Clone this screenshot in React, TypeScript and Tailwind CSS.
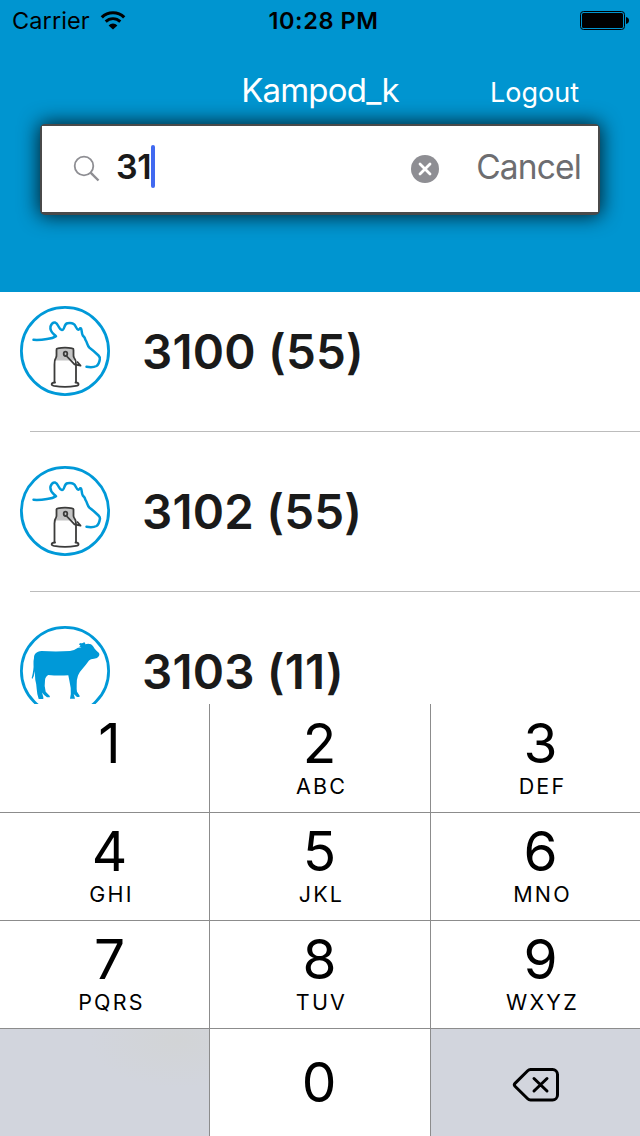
import clsx from "clsx";
import { useState } from "react";

type Kind = "cow" | "calf";

type Animal = {
  id: string;
  group: number;
  kind: Kind;
};

const animals: Animal[] = [
  { id: "3100", group: 55, kind: "cow" },
  { id: "3102", group: 55, kind: "cow" },
  { id: "3103", group: 11, kind: "calf" },
];

const keys = [
  { digit: "1", letters: "" },
  { digit: "2", letters: "ABC" },
  { digit: "3", letters: "DEF" },
  { digit: "4", letters: "GHI" },
  { digit: "5", letters: "JKL" },
  { digit: "6", letters: "MNO" },
  { digit: "7", letters: "PQRS" },
  { digit: "8", letters: "TUV" },
  { digit: "9", letters: "WXYZ" },
];

function WifiIcon() {
  return (
    <svg width="26" height="20" viewBox="0 0 26 20" fill="none" stroke="#000">
      <path d="M1.8 6.3a16 16 0 0 1 22.4 0" strokeWidth="3.2" />
      <path d="M5.7 10.6a10.4 10.4 0 0 1 14.6 0" strokeWidth="2.9" />
      <path d="M13 18.6l-4.4-4.2a6.2 6.2 0 0 1 8.8 0z" fill="#000" stroke="none" />
    </svg>
  );
}

function BatteryIcon() {
  return (
    <svg width="50" height="20" viewBox="0 0 50 20" fill="none">
      <rect x="0.5" y="0.5" width="44" height="18" rx="3" stroke="#000" />
      <rect x="2" y="2" width="41" height="15" rx="1.5" fill="#000" />
      <path d="M46 6c2 .3 3 1.6 3 3.5s-1 3.2-3 3.5z" fill="#000" />
    </svg>
  );
}

function SearchIcon() {
  return (
    <svg width="28" height="28" viewBox="0 0 28 28" fill="none" stroke="#8e8e93">
      <circle cx="11" cy="11" r="9.3" strokeWidth="1.8" />
      <path d="M17.6 17.6L25.5 25.5" strokeWidth="2.4" />
    </svg>
  );
}

function ClearIcon() {
  return (
    <svg width="28" height="28" viewBox="0 0 28 28" fill="none">
      <circle cx="14" cy="14" r="14" fill="#8e8e93" />
      <path
        d="M9 9l10 10M19 9L9 19"
        stroke="#fff"
        strokeWidth="2.8"
        strokeLinecap="round"
      />
    </svg>
  );
}

function BackspaceIcon() {
  return (
    <svg
      width="48"
      height="36"
      viewBox="0 0 48 36"
      fill="none"
      stroke="#000"
      strokeWidth="3"
      strokeLinecap="round"
      strokeLinejoin="round"
    >
      <path d="M18.5 2.5H40.5a5 5 0 0 1 5 5V28a5 5 0 0 1-5 5H18.5a4 4 0 0 1-2.8-1.2L3 19.2a2 2 0 0 1 0-2.8L15.7 3.7a4 4 0 0 1 2.8-1.2z" />
      <path d="M22 11.5l13 12.5M35 11.5L22 24" />
    </svg>
  );
}

function CowIcon() {
  return (
    <svg width="90" height="90" viewBox="0 0 90 90" fill="none">
      <circle cx="45" cy="45" r="43.6" stroke="#0099d8" strokeWidth="2.8" />
      <path
        d="M13.5 33.8Q20 34.2 27 33Q33 32.5 36 30.3C33.5 27.5 29.5 26 30.5 20.5C31.5 17.500 33.5 16.3 35.3 16.6C38.5 17.5 38.5 23.7 42 24C45 24 43.5 18.5 47.3 17.3Q51 16.5 53.5 17.8C56 19 56 23.3 58.3 23.7C59.8 23.5 60 21.5 61 22.5C62 24 61.5 27.5 62.8 29.5Q65 31.5 65.5 34C67.5 36.5 67 39.5 69.5 41.7Q74 45 78.5 49.5Q80.5 51.5 79.8 53.5Q79 58.5 76.5 60C73 61.7 69.5 61.3 66.5 60.7"
        stroke="#0099d8"
        strokeWidth="2.5"
        strokeLinecap="round"
        strokeLinejoin="round"
      />
      {/* milk can */}
      <path
        d="M37.5 42.3Q45 41 52.5 42.3Q53.8 42.6 53.5 44V50Q53.8 52 55.5 54.5H34.5Q36.2 52 36.5 50V44Q36.2 42.6 37.5 42.3Z"
        fill="#c4c4c4"
      />
      <path
        d="M34.5 77V58.5Q34.3 54 36 51.5Q36.6 50.5 36.5 49V44Q36.3 42.5 37.7 42.3Q45 41 52.3 42.3Q53.7 42.5 53.5 44V49Q53.4 50.5 54 51.5Q56.2 54 56 58.5V77"
        stroke="#3c3c3b"
        strokeWidth="1.8"
        strokeLinejoin="round"
      />
      <path
        d="M35 76.5C30.5 77 31 79.3 34 79.9Q45 81.8 56 79.9C59.3 79.3 59.6 77 55.5 76.5"
        stroke="#3c3c3b"
        strokeWidth="1.8"
        strokeLinecap="round"
      />
      <ellipse cx="45.5" cy="47.8" rx="1.8" ry="2.2" stroke="#3c3c3b" strokeWidth="1.8" />
      <path
        d="M46.5 50L54.5 58.3L60.5 59.7L57 55.5"
        stroke="#3c3c3b"
        strokeWidth="1.8"
        strokeLinejoin="round"
      />
    </svg>
  );
}

function CalfIcon() {
  return (
    <svg width="90" height="90" viewBox="0 0 90 90" fill="none">
      <circle cx="45" cy="45" r="43.6" stroke="#0099d8" strokeWidth="2.8" />
      <path
        d="M14 32C14 28 16 25.5 21.7 25Q36 25.8 50 25Q54.5 24.5 58 21.8L61.5 21.3L59.2 20.5L60.5 19.5L59 18.5L60 17Q62.3 18 64 16.3Q65.5 16.5 65.3 18.2Q68.5 17.3 71 18.3Q73 19.5 74.7 22.7Q77 25.5 79 27Q79.8 28.5 79 30Q77.5 32.5 74 32.8Q70.5 33 69 34.5Q65.5 39.5 62.3 43Q59 46.5 58 49.5Q56.3 54.5 56.7 58.5Q56.5 63 57 65.7L59.5 69.5V71H57L53.7 68L55 72.7H50Q51.3 68 50.7 62Q49.5 55 48.3 49.3Q38 50 28.3 49Q25 51 25 54.5Q24 60 25.7 65.7L29.8 70V71.3H27Q24 69.5 22 66.5L23.3 71V73H18.7Q17 68.5 16.7 63Q16.5 58 15.3 54L14.7 45Q14.3 50 12.3 53L11.7 52Q14 43 13.5 38Q13.3 35 14 32Z"
        fill="#0099d8"
      />
    </svg>
  );
}

function StatusBar() {
  return (
    <div className="flex h-10 items-center justify-between pt-px pr-[10px] pl-3 text-black">
      <div className="flex flex-1 items-center gap-[10px]">
        <span className="text-[23.5px] tracking-[0.1px]">Carrier</span>
        <WifiIcon />
      </div>
      <span className="pl-[5px] text-[23.5px] font-semibold tracking-[0.6px]">
        10:28 PM
      </span>
      <div className="flex flex-1 justify-end">
        <BatteryIcon />
      </div>
    </div>
  );
}

function SearchField({ query, onClear }: { query: string; onClear: () => void }) {
  return (
    <div className="mx-10 mt-[3px] rounded-[5px] bg-[#4a4a4a] px-[2px] pt-[2px] pb-[3px] shadow-[0_0_20px_1px_rgba(0,0,0,0.8)]">
      <div className="flex h-[86px] items-center bg-white pr-[17px] pl-[31px]">
        <SearchIcon />
        <div className="ml-[15px] flex items-center pb-[5px]">
          <span className="text-[34px] font-semibold tracking-[-0.4px] text-[#1a1a1a]">
            {query}
          </span>
          <span className="h-[43px] w-1 rounded-sm bg-[#4169f0]" />
        </div>
        <button className="ml-auto" onClick={onClear} aria-label="Clear">
          <ClearIcon />
        </button>
        <button
          className="ml-[37px] pb-[3px] text-[33.5px] tracking-[-0.85px] text-[#6d6d70]"
          onClick={onClear}
        >
          Cancel
        </button>
      </div>
    </div>
  );
}

function AnimalRow({ animal }: { animal: Animal }) {
  return (
    <li className="ml-[30px] h-40 border-b border-[#bcbcbc]">
      <div className="-ml-[10px] flex h-full items-center gap-8 pb-px">
        {animal.kind === "cow" ? <CowIcon /> : <CalfIcon />}
        <span className="pt-px text-[47.5px] font-semibold tracking-[0.2px] text-[#1a1a1a] [font-feature-settings:'calt'_0]">
          {animal.id} ({animal.group})
        </span>
      </div>
    </li>
  );
}

function Keypad({
  onPress,
  onDelete,
}: {
  onPress: (digit: string) => void;
  onDelete: () => void;
}) {
  return (
    <div className="grid h-[432px] grid-cols-[210px_221px_209px] grid-rows-4 bg-white text-black">
      {keys.map(({ digit, letters }, i) => (
        <button
          key={digit}
          onClick={() => onPress(digit)}
          className={clsx(
            "flex flex-col items-center border-[#8c8c8c]",
            i > 2 ? "border-t pt-[7px]" : "pt-2",
            i % 3 !== 2 && "border-r",
            i % 3 !== 1 && "pl-[11px]"
          )}
        >
          <span className="-ml-px text-[55px] leading-[63px]">{digit}</span>
          <span className="mt-px -mr-[3px] text-[21.5px] leading-5 tracking-[2.2px]">
            {letters}
          </span>
        </button>
      ))}
      <div className="border-t border-r border-[#8c8c8c] bg-[#d2d5dd] bg-[radial-gradient(ellipse_at_85%_10%,#d2d4d6,transparent_35%)]" />
      <button
        className="border-t border-r border-[#8c8c8c] pr-[2px] text-[55px] leading-none"
        onClick={() => onPress("0")}
      >
        0
      </button>
      <button
        className="flex items-center justify-center border-t border-[#8c8c8c] bg-[#d2d5dd] pt-[5px]"
        onClick={onDelete}
        aria-label="Delete"
      >
        <BackspaceIcon />
      </button>
    </div>
  );
}

export default function App() {
  const [query, setQuery] = useState("31");
  const results = animals.filter((animal) => animal.id.startsWith(query));

  return (
    <div className="flex h-[1136px] w-[640px] flex-col overflow-hidden bg-white font-['Inter',sans-serif]">
      <header className="h-[292px] shrink-0 bg-[#0095d0]">
        <StatusBar />
        <div className="grid h-[81px] grid-cols-[1fr_160px_1fr] items-center pt-5 text-white">
          <h1 className="col-start-2 text-center text-[33px] tracking-[-0.8px]">
            Kampod_k
          </h1>
          <button className="justify-self-end pt-[6px] pr-[61px] text-[27px]">
            Logout
          </button>
        </div>
        <SearchField query={query} onClear={() => setQuery("")} />
      </header>
      <main className="h-[412px] shrink-0 overflow-hidden">
        <ul className="-mt-5">
          {results.map((animal) => (
            <AnimalRow key={animal.id} animal={animal} />
          ))}
        </ul>
      </main>
      <Keypad
        onPress={(digit) => setQuery(query + digit)}
        onDelete={() => setQuery(query.slice(0, -1))}
      />
    </div>
  );
}
